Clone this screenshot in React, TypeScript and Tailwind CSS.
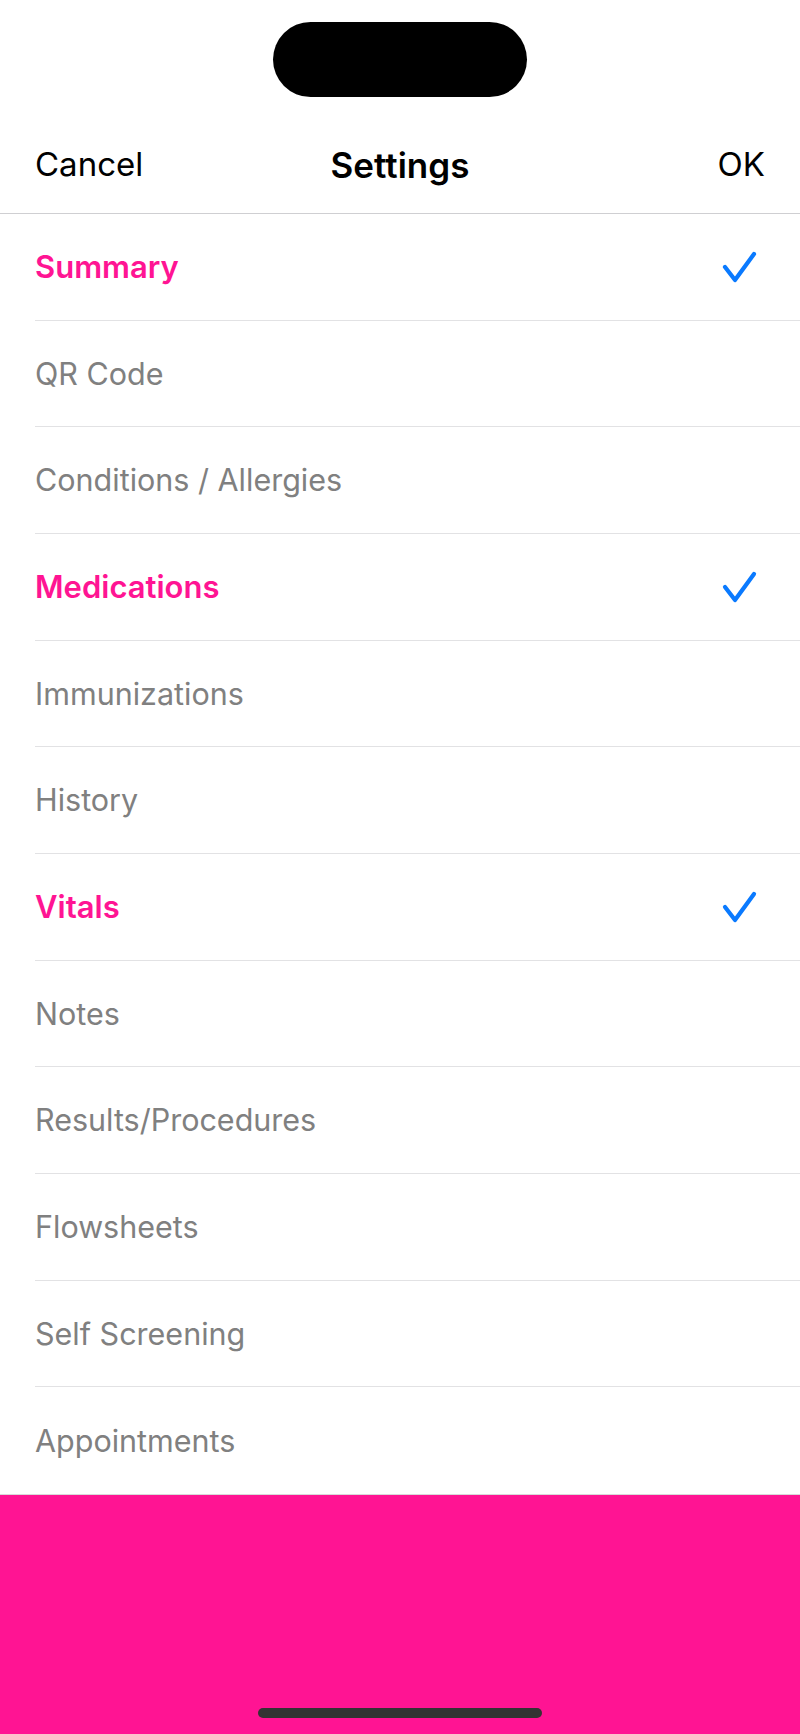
// Settings sheet — choose which sections to show
const sections = [
  { label: "Summary", on: true },
  { label: "QR Code", on: false },
  { label: "Conditions / Allergies", on: false },
  { label: "Medications", on: true },
  { label: "Immunizations", on: false },
  { label: "History", on: false },
  { label: "Vitals", on: true },
  { label: "Notes", on: false },
  { label: "Results/Procedures", on: false },
  { label: "Flowsheets", on: false },
  { label: "Self Screening", on: false },
  { label: "Appointments", on: false },
];

function Check() {
  return (
    <svg width="40" height="40" viewBox="0 0 40 40" fill="none">
      <path
        d="M5 20L15 33L34 7"
        stroke="#0a7aff"
        strokeWidth="4.2"
        strokeLinecap="round"
        strokeLinejoin="round"
      />
    </svg>
  );
}

export default function App() {
  return (
    <div
      className="flex h-[1734px] w-[800px] flex-col overflow-hidden bg-white"
      style={{ fontFamily: "Inter, 'Liberation Sans', sans-serif" }}
    >
      {/* 顶部 + 导航 */}
      <header className="flex h-[214px] shrink-0 flex-col border-b border-[#cfcfd2]">
        <div className="mx-auto mt-[22px] h-[75px] w-[254px] rounded-full bg-black" />
        <div className="mt-auto grid h-[96px] grid-cols-[1fr_auto_1fr] items-center px-[35px] text-[33px] text-black">
          <span>Cancel</span>
          <span className="text-[35px] font-semibold">Settings</span>
          <span className="text-right">OK</span>
        </div>
      </header>

      {/* 列表 */}
      <ul className="shrink-0">
        {sections.map((s, i) => (
          <li key={s.label} className="pl-[35px]">
            <div
              className={`flex h-[106.67px] items-center justify-between pr-[40px] ${
                i < sections.length - 1 ? "border-b border-[#e2e2e4]" : ""
              }`}
            >
              <span
                className={
                  s.on
                    ? "text-[31px] font-semibold text-[#ff1493]"
                    : "text-[30.5px] text-[#808080]"
                }
              >
                {s.label}
              </span>
              {s.on && <Check />}
            </div>
          </li>
        ))}
      </ul>

      {/* 底部 */}
      <div className="flex flex-1 flex-col items-center justify-end border-t border-[#d9d9d9] bg-[#ff1493] pb-[16px]">
        <div className="h-[10px] w-[284px] rounded-full bg-[#333333]" />
      </div>
    </div>
  );
}
